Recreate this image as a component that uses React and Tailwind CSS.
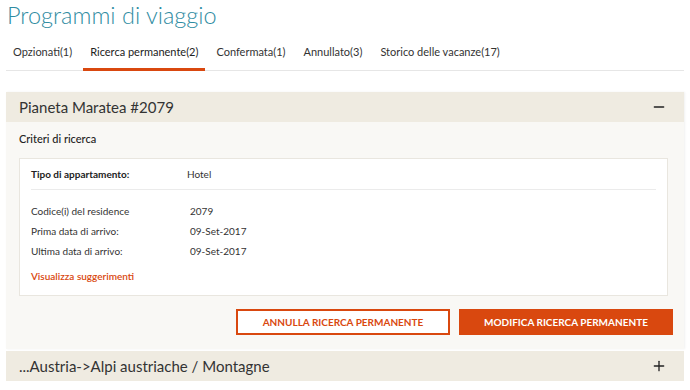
import { Minus, Plus } from "lucide-react";

const tabs = [
  { label: "Opzionati(1)" },
  { label: "Ricerca permanente(2)", active: true },
  { label: "Confermata(1)" },
  { label: "Annullato(3)" },
  { label: "Storico delle vacanze(17)" },
];

const rows = [
  ["Codice(i) del residence", "2079"],
  ["Prima data di arrivo:", "09-Set-2017"],
  ["Ultima data di arrivo:", "09-Set-2017"],
];

export default function App() {
  return (
    <div className="w-[690px] h-[390px] overflow-hidden bg-white px-[6px] text-[#333]" style={{ fontFamily: "Lato, 'Open Sans', sans-serif" }}>
      {/* header */}
      <h1 className="pl-[1px] pt-[1px] text-[23.5px] leading-[28px] font-light text-[#2f8ca2]">Programmi di viaggio</h1>

      {/* tabs */}
      <div className="mt-[15px] flex border-b border-[#e6e6e6]">
        {tabs.map((t) => (
          <div
            key={t.label}
            className={`-mb-[1px] mr-[4px] border-b-[3px] px-[7px] pb-[8px] text-[11px] leading-[16px] ${
              t.active ? "border-[#d9480f] text-[#222]" : "border-transparent text-[#333]"
            }`}
          >
            {t.label}
          </div>
        ))}
      </div>

      {/* open panel */}
      <div className="mt-[21px] shadow-[1px_0_2px_rgba(0,0,0,0.06)]">
        <div className="flex h-[30px] items-center justify-between bg-[#efebe1] pl-[13px] pr-[17px]">
          <span className="text-[15px] text-[#333]">Pianeta Maratea #2079</span>
          <Minus size={16} strokeWidth={2} className="text-[#222]" />
        </div>
        <div className="bg-[#f9f8f5] pl-[13px] pr-[11px] pb-[14px]">
          <div className="pt-[10px] pb-[12px] text-[11px] leading-[14px] font-medium text-[#222]">Criteri di ricerca</div>
          <div className="mr-[5px] border border-[#e9e6df] bg-white px-[11px]">
            <div className="flex h-[31px] items-center border-b border-[#ebebeb] text-[10px]">
              <span className="w-[156px] font-bold text-[#222]">Tipo di appartamento:</span>
              <span>Hotel</span>
            </div>
            <div className="pt-[11px]">
              {rows.map(([k, v]) => (
                <div key={k} className="flex h-[20px] items-center text-[10px]">
                  <span className="w-[159px]">{k}</span>
                  <span>{v}</span>
                </div>
              ))}
            </div>
            <div className="pt-[8px] pb-[12px] text-[10px] leading-[14px] font-semibold text-[#d9480f]">Visualizza suggerimenti</div>
          </div>
          <div className="mt-[13px] flex justify-end gap-[9px]">
            <button className="h-[26px] w-[214px] border-2 border-[#d9480f] bg-white text-[10px] font-bold text-[#d9480f]">ANNULLA RICERCA PERMANENTE</button>
            <button className="h-[26px] w-[214px] bg-[#d9480f] text-[10px] font-bold text-white">MODIFICA RICERCA PERMANENTE</button>
          </div>
        </div>
      </div>

      {/* collapsed panel */}
      <div className="mt-[2px] flex h-[30px] items-center justify-between bg-[#efebe1] pl-[13px] pr-[17px]">
        <span className="text-[15px] text-[#333]">...Austria-&gt;Alpi austriache / Montagne</span>
        <Plus size={16} strokeWidth={2} className="text-[#222]" />
      </div>
    </div>
  );
}
